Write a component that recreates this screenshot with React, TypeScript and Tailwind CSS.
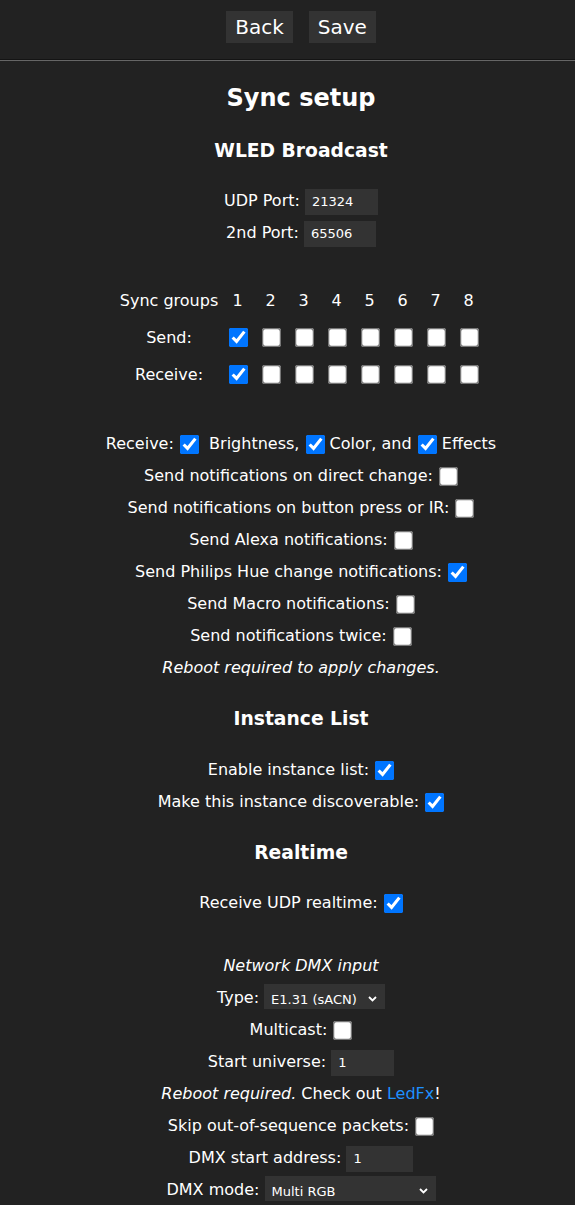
import React from 'react';

function Check({ on = false }: { on?: boolean }) {
  return (
    <input
      type="checkbox"
      defaultChecked={on}
      className="m-[3px_3px_3px_4px] scale-150 align-middle"
    />
  );
}

function Row({ children }: { children: React.ReactNode }) {
  return <div className="h-8 leading-8 whitespace-nowrap">{children}</div>;
}

function NumInput({ value, width }: { value: string; width: string }) {
  return (
    <input
      type="text"
      defaultValue={value}
      className={`${width} h-[26px] bg-[#333] px-[7px] text-[13px] text-white align-middle outline-none`}
    />
  );
}

function Dropdown({ value, width }: { value: string; width: string }) {
  return (
    <span className="relative inline-block align-middle">
      <select
        defaultValue={value}
        className={`${width} h-[25px] appearance-none bg-[#333] pl-[7px] text-[13px] text-white outline-none`}
      >
        <option>{value}</option>
      </select>
      <svg
        className="pointer-events-none absolute right-[8px] top-1/2 -translate-y-1/2"
        width="9"
        height="6"
        viewBox="0 0 9 6"
      >
        <path d="M1 1l3.5 3.5L8 1" stroke="#fff" strokeWidth="1.8" fill="none" />
      </svg>
    </span>
  );
}

const groups = [1, 2, 3, 4, 5, 6, 7, 8];

export default function App() {
  return (
    <div className="min-h-[1205px] bg-[#222] text-center text-base text-white font-['DejaVu_Sans',sans-serif]">
      {/* Top buttons */}
      <div className="flex h-[59px] justify-center gap-4 pl-[27px] pt-[11px]">
        <button className="h-8 bg-[#333] px-[9px] text-xl leading-8 text-white">Back</button>
        <button className="h-8 bg-[#333] px-[9px] text-xl leading-8 text-white">Save</button>
      </div>
      <div className="border-t border-b border-t-[#141414] border-b-[#666]" />

      <div className="pl-[27px]">
        <h2 className="mt-[13px] h-12 text-2xl font-bold leading-[48px]">Sync setup</h2>
        <h3 className="mt-[10px] h-[37px] text-[18.72px] font-bold leading-[37px]">WLED Broadcast</h3>

        <div className="mt-[16px]">
          <Row>
            UDP Port: <NumInput value="21324" width="w-[73px]" />
          </Row>
          <Row>
            2nd Port: <NumInput value="65506" width="w-[72px]" />
          </Row>
        </div>

        {/* Sync groups table */}
        <div className="mt-[33px] flex justify-center">
          <div className="grid grid-cols-[104px_repeat(8,33px)]">
            <div className="flex h-[37px] items-center justify-center">Sync groups</div>
            {groups.map((g) => (
              <div key={g} className="flex h-[37px] items-center justify-center">
                {g}
              </div>
            ))}
            <div className="flex h-[37px] items-center justify-center">Send:</div>
            {groups.map((g) => (
              <div key={g} className="flex h-[37px] items-center justify-center">
                <Check on={g === 1} />
              </div>
            ))}
            <div className="flex h-[37px] items-center justify-center">Receive:</div>
            {groups.map((g) => (
              <div key={g} className="flex h-[37px] items-center justify-center">
                <Check on={g === 1} />
              </div>
            ))}
          </div>
        </div>

        <div className="mt-[35px]">
          <Row>
            Receive: <Check on /> &nbsp;Brightness, <Check on /> Color, and <Check on /> Effects
          </Row>
          <Row>
            Send notifications on direct change: <Check />
          </Row>
          <Row>
            Send notifications on button press or IR: <Check />
          </Row>
          <Row>
            Send Alexa notifications: <Check />
          </Row>
          <Row>
            Send Philips Hue change notifications: <Check on />
          </Row>
          <Row>
            Send Macro notifications: <Check />
          </Row>
          <Row>
            Send notifications twice: <Check />
          </Row>
          <Row>
            <i>Reboot required to apply changes.</i>
          </Row>
        </div>

        <h3 className="mt-[16px] h-[37px] text-[18.72px] font-bold leading-[37px]">Instance List</h3>
        <div className="mt-[17px]">
          <Row>
            Enable instance list: <Check on />
          </Row>
          <Row>
            Make this instance discoverable: <Check on />
          </Row>
        </div>

        <h3 className="mt-[16px] h-[37px] text-[18.72px] font-bold leading-[37px]">Realtime</h3>
        <div className="mt-[16px]">
          <Row>
            Receive UDP realtime: <Check on />
          </Row>
        </div>

        <div className="mt-[31px]">
          <Row>
            <i>Network DMX input</i>
          </Row>
          <Row>
            Type: <Dropdown value="E1.31 (sACN)" width="w-[121px]" />
          </Row>
          <Row>
            Multicast: <Check />
          </Row>
          <Row>
            Start universe: <NumInput value="1" width="w-[63px]" />
          </Row>
          <Row>
            <i>Reboot required.</i> Check out{' '}
            <a href="#" className="text-[#1e90ff]">
              LedFx
            </a>
            !
          </Row>
          <Row>
            Skip out-of-sequence packets: <Check />
          </Row>
          <Row>
            DMX start address: <NumInput value="1" width="w-[67px]" />
          </Row>
          <Row>
            DMX mode: <Dropdown value="Multi RGB" width="w-[171px]" />
          </Row>
        </div>
      </div>
    </div>
  );
}
